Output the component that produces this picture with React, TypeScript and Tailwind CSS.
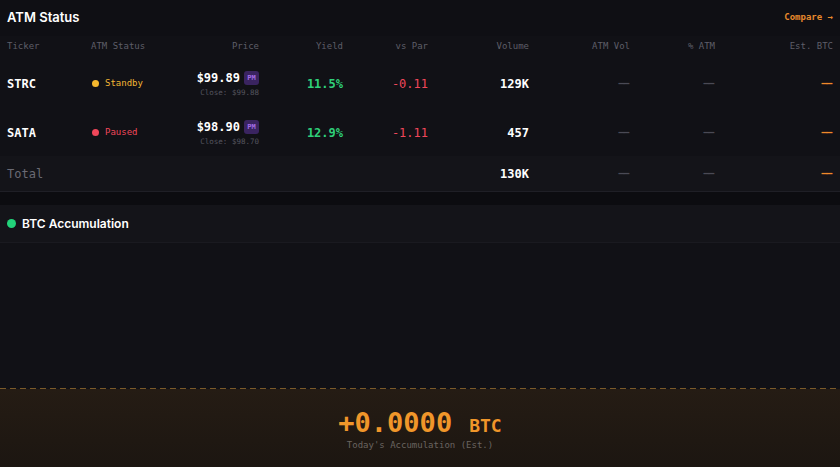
import React from 'react';

const mono = "font-['DejaVu_Sans_Mono','Liberation_Mono',monospace]";
const sans = "font-['Inter','Noto_Sans',sans-serif]";

interface Row {
  ticker: string;
  status: 'Standby' | 'Paused';
  price: string;
  close: string;
  yieldPct: string;
  vsPar: string;
  volume: string;
}

const rows: Row[] = [
  { ticker: 'STRC', status: 'Standby', price: '$99.89', close: 'Close: $99.88', yieldPct: '11.5%', vsPar: '-0.11', volume: '129K' },
  { ticker: 'SATA', status: 'Paused', price: '$98.90', close: 'Close: $98.70', yieldPct: '12.9%', vsPar: '-1.11', volume: '457' },
];

const cols = 'grid grid-cols-[84px_95px_80px_84px_85px_101px_101px_85px_118px] items-center';

function DashCell({ orange }: { orange?: boolean }) {
  return (
    <span className={`${mono} block text-right text-[11px] font-bold leading-none tracking-[-1.5px] pr-[1.5px] ${orange ? 'text-[#ee8a2a]' : 'text-[#4a4a55]'}`}>
      −−
    </span>
  );
}

export default function App() {
  return (
    <div className="w-[840px] h-[467px] bg-[#111116] flex flex-col overflow-hidden">
      <div className="bg-[#0f0f14] h-[36px] flex items-center justify-between px-[7px]">
        <h2 className={`${sans} text-[13px] font-semibold text-white`}>ATM Status</h2>
        <span className={`${mono} text-[9px] font-semibold text-[#e8892c]`}>Compare →</span>
      </div>

      <div className="bg-[#111116]">
        <div className={`${cols} h-[22px] ${mono} text-[9px] text-[#5e5e68]`}>
          <span className="pl-[7px]">Ticker</span>
          <span className="pl-[7px]">ATM Status</span>
          <span className="text-right">Price</span>
          <span className="text-right">Yield</span>
          <span className="text-right">vs Par</span>
          <span className="text-right">Volume</span>
          <span className="text-right">ATM Vol</span>
          <span className="text-right">% ATM</span>
          <span className="text-right">Est. BTC</span>
        </div>

        {rows.map((r) => (
          <div key={r.ticker} className={`${cols} h-[49px] pt-[2px]`}>
            <span className={`${mono} pl-[7px] text-[12px] font-bold text-white`}>{r.ticker}</span>
            <span className="pl-[8px] flex items-center gap-[6px]">
              <span className={`w-[7px] h-[7px] rounded-full ${r.status === 'Standby' ? 'bg-[#f5b82e]' : 'bg-[#f0475a]'}`} />
              <span className={`${mono} text-[9px] ${r.status === 'Standby' ? 'text-[#f2b634]' : 'text-[#f0475a]'}`}>{r.status}</span>
            </span>
            <div className="flex flex-col items-end">
              <div className="flex items-center gap-[4px]">
                <span className={`${mono} text-[12px] font-semibold text-white`}>{r.price}</span>
                <span className={`${mono} bg-[#3a2460] text-[#a46ee8] text-[7px] font-bold w-[15px] h-[14px] rounded-[3px] flex items-center justify-center`}>PM</span>
              </div>
              <span className={`${mono} text-[7.5px] text-[#55555f]`}>{r.close}</span>
            </div>
            <span className={`${mono} text-right text-[12px] font-semibold text-[#2fd07a]`}>{r.yieldPct}</span>
            <span className={`${mono} text-right text-[12px] text-[#f0475a]`}>{r.vsPar}</span>
            <span className={`${mono} text-right text-[12px] font-semibold text-white`}>{r.volume}</span>
            <DashCell />
            <DashCell />
            <DashCell orange />
          </div>
        ))}

        <div className={`${cols} h-[36px] bg-[#141419] border-b border-[#1f1f26]`}>
          <span className={`${mono} pl-[7px] text-[12px] text-[#6a6a74]`}>Total</span>
          <span />
          <span />
          <span />
          <span />
          <span className={`${mono} text-right text-[12px] font-semibold text-white`}>130K</span>
          <DashCell />
          <DashCell />
          <DashCell orange />
        </div>
      </div>

      <div className="h-[13px] bg-[#0c0c10]" />

      <div className="h-[38px] bg-[#141419] border-b border-[#1a1a20] flex items-center gap-[6px] px-[7px]">
        <span className="w-[9px] h-[9px] rounded-full bg-[#22d37a]" />
        <span className={`${sans} text-[12px] font-semibold text-white`}>BTC Accumulation</span>
      </div>

      <div className="flex-1 bg-[#111116]" />

      <div className="h-[1px] bg-[repeating-linear-gradient(90deg,#7a5a2a_0_6px,transparent_6px_10px)]" />
      <div className="h-[78px] bg-gradient-to-b from-[#251c14] to-[#1c1611] flex flex-col items-center justify-center pt-[4px]">
        <div className={`${mono} text-[#f0962a] font-semibold flex items-baseline gap-[17px]`}>
          <span className="text-[27px] leading-[31px]">+0.0000</span>
          <span className="text-[18px]">BTC</span>
        </div>
        <span className={`${mono} text-[9px] text-[#6a6460]`}>Today's Accumulation (Est.)</span>
      </div>
    </div>
  );
}
